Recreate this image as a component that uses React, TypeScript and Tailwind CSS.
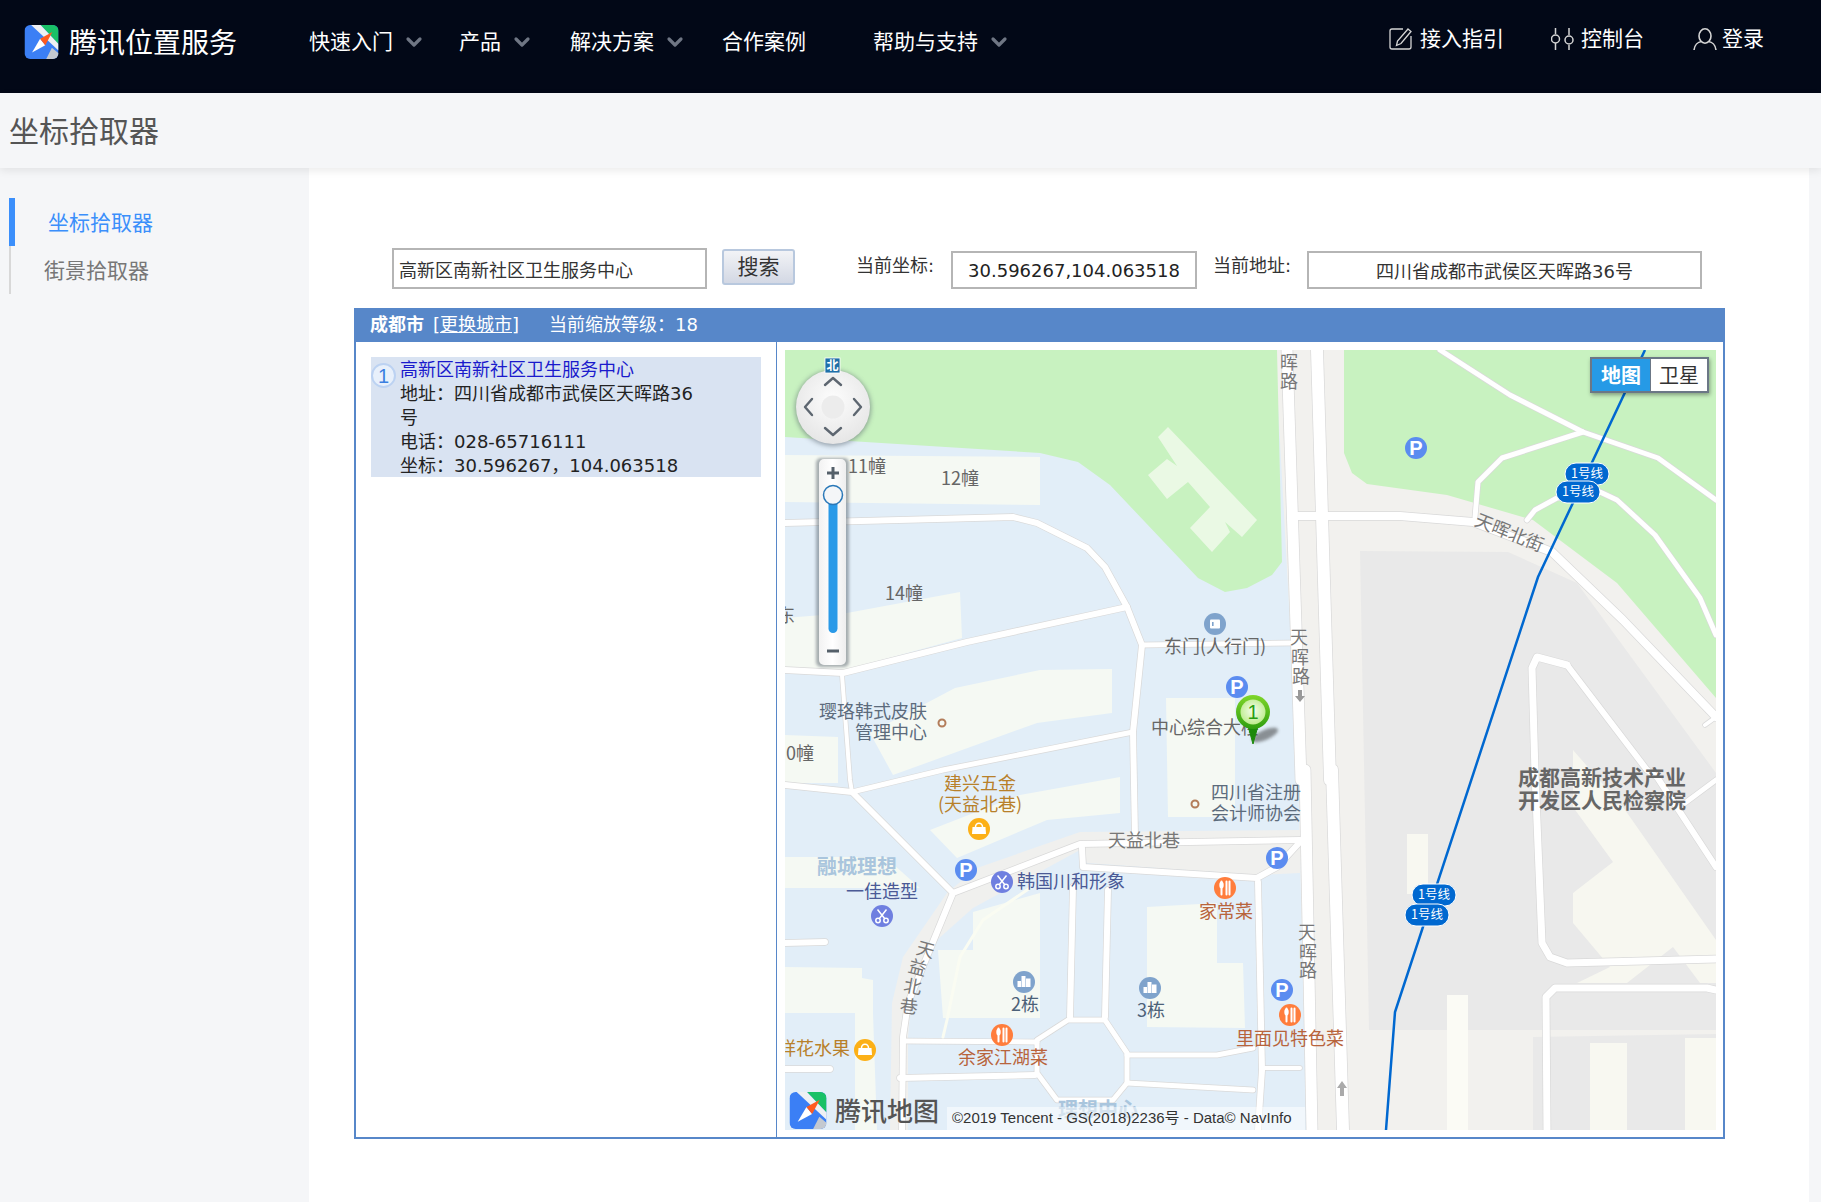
import { ChevronDown } from "lucide-react";

const navItems = [
  { label: "快速入门", width: "w-[150px]", caret: true },
  { label: "产品", width: "w-[111px]", caret: true },
  { label: "解决方案", width: "w-[152px]", caret: true },
  { label: "合作案例", width: "w-[151px]", caret: false },
  { label: "帮助与支持", width: "w-[140px]", caret: true },
];

// [points, width] in map coordinates
const roads: [string, number][] = [
  ["502,0 516,430 520,420 527,780", 11],
  ["532,0 545,430 547,420 558,780", 12],
  ["507,166 615,166 688,172 767,202 838,270 931,367", 8],
  ["655,0 725,45 798,82 873,108 931,150", 5],
  ["798,82 717,108 693,132 690,167", 5],
  ["742,170 750,160 772,148 815,142 832,150 870,185 915,248 931,285", 5],
  ["782,315 752,307 747,318 750,423 757,593 765,607 782,613 931,609", 7],
  ["782,315 862,420 872,427 931,517", 6],
  ["762,780 761,647 770,638 922,638 931,640", 7],
  ["931,430 900,453", 5],
  ["931,367 920,375", 4],
  ["0,173 228,167 252,173 302,198 320,217 342,257 357,295 348,382 350,487", 6],
  ["0,320 58,323 182,292 342,257", 6],
  ["357,295 505,293", 5],
  ["57,325 65,430 67,442", 4],
  ["67,442 158,420 348,382", 5],
  ["0,435 67,442 167,542", 6],
  ["117,780 118,687 123,653 168,543 295,494 515,490", 6],
  ["297,498 298,517 472,528 492,517 515,492", 6],
  ["473,532 477,720 473,780", 6],
  ["288,537 285,667", 6],
  ["323,540 320,667", 6],
  ["118,691 252,692", 5],
  ["115,728 250,725", 6],
  ["342,705 432,705 468,698", 5],
  ["342,733 468,740", 5],
  ["477,718 515,718", 4],
  ["0,593 40,592", 6],
  ["0,719 45,719", 6],
];

const labels = [
  { text: "11幢", cls: "left-[63px] top-[115px] text-[#666]" },
  { text: "12幢", cls: "left-[156px] top-[127px] text-[#666]" },
  { text: "14幢", cls: "left-[100px] top-[242px] text-[#666]" },
  { text: "东", cls: "left-[-8px] top-[264px] text-[#666]" },
  { text: "0幢", cls: "left-[1px] top-[402px] text-[#666]" },
  { text: "璎珞韩式皮肤", cls: "left-[34px] top-[360px] text-[#5c6b7c]" },
  { text: "管理中心", cls: "left-[70px] top-[381px] text-[#5c6b7c]" },
  { text: "东门(人行门)", cls: "left-[379px] top-[295px] text-[#666]" },
  { text: "中心综合大楼", cls: "left-[366px] top-[376px] text-[#666]" },
  { text: "四川省注册", cls: "left-[426px] top-[441px] text-[#5c6b7c]" },
  { text: "会计师协会", cls: "left-[426px] top-[462px] text-[#5c6b7c]" },
  { text: "建兴五金", cls: "left-[159px] top-[432px] text-[#b8802a]" },
  { text: "(天益北巷)", cls: "left-[153px] top-[453px] text-[#b8802a]" },
  { text: "天益北巷", cls: "left-[323px] top-[489px] text-[#777]" },
  { text: "一佳造型", cls: "left-[61px] top-[540px] text-[#4b5a96]" },
  { text: "韩国川和形象", cls: "left-[232px] top-[530px] text-[#4b5a96]" },
  { text: "家常菜", cls: "left-[414px] top-[560px] text-[#b8643c]" },
  { text: "2栋", cls: "left-[226px] top-[653px] text-[#4c6178]" },
  { text: "3栋", cls: "left-[352px] top-[659px] text-[#4c6178]" },
  { text: "里面见特色菜", cls: "left-[451px] top-[687px] text-[#b8643c]" },
  { text: "余家江湖菜", cls: "left-[173px] top-[706px] text-[#b8643c]" },
  { text: "祥花水果", cls: "left-[-7px] top-[697px] text-[#b8802a]" },
  { text: "晖", cls: "left-[495px] top-[11px] text-[#777]" },
  { text: "路", cls: "left-[495px] top-[30px] text-[#777]" },
  { text: "天", cls: "left-[505px] top-[286px] text-[#777]" },
  { text: "晖", cls: "left-[506px] top-[306px] text-[#777]" },
  { text: "路", cls: "left-[507px] top-[325px] text-[#777]" },
  { text: "天", cls: "left-[513px] top-[581px] text-[#777]" },
  { text: "晖", cls: "left-[514px] top-[601px] text-[#777]" },
  { text: "路", cls: "left-[514px] top-[619px] text-[#777]" },
  { text: "天", cls: "left-[132px] top-[598px] rotate-[15deg] text-[#777]" },
  { text: "益", cls: "left-[124px] top-[616px] rotate-[15deg] text-[#777]" },
  { text: "北", cls: "left-[119px] top-[635px] rotate-[10deg] text-[#777]" },
  { text: "巷", cls: "left-[115px] top-[655px] rotate-[6deg] text-[#777]" },
  { text: "天晖北街", cls: "left-[689px] top-[181px] rotate-[22deg] text-[#777]" },
];

const parkings = [[631, 98], [452, 337], [181, 520], [492, 508], [497, 640]];
const lineBadges = [[802, 124], [793, 142], [649, 545], [642, 565]];

function Logo({ className }: { className: string }) {
  return (
    <svg viewBox="0 0 36 36" className={className}>
      <clipPath id="logo-clip">
        <rect width="36" height="36" rx="6" />
      </clipPath>
      <g clipPath="url(#logo-clip)">
        <rect width="36" height="36" fill="#3b7ff5" />
        <path d="M17 0H36V20Z" fill="#19c167" />
        <path d="M7 0H17L36 20V27Z" fill="#eef0f3" />
        <path d="M29 24L36 30V36H23Z" fill="#c4c9d0" />
        <path d="M8 29L16.5 14.5L22 21.5Z" fill="#fff" />
        <path d="M16.5 14.5L29.5 7.5L22 21.5Z" fill="#ff5a1f" />
      </g>
    </svg>
  );
}

function Poi({ x, y, color, kind }: { x: number; y: number; color: string; kind: string }) {
  return (
    <g transform={`translate(${x} ${y})`}>
      <circle r="11" fill={color} />
      {kind === "bag" && (
        <g fill="#fff">
          <path d="M-6.5 -2H6.5L7 5H-7Z" />
          <path d="M-3.5 -2A3.5 3.8 0 0 1 3.5 -2" fill="none" stroke="#fff" strokeWidth="1.5" />
        </g>
      )}
      {kind === "food" && (
        <g stroke="#fff" strokeLinecap="round" fill="none">
          <path d="M-3.5 -6.5V6.5" strokeWidth="2" />
          <ellipse cx="-3.5" cy="-3" rx="2.2" ry="3.6" fill="#fff" stroke="none" />
          <path d="M1.5 -6.5V6.5M4.5 -6.5V6.5" strokeWidth="2" />
        </g>
      )}
      {kind === "cut" && (
        <g stroke="#fff" fill="none" strokeWidth="1.5">
          <path d="M-4.5 -6.5L3 3M4.5 -6.5L-3 3" />
          <circle cx="-4" cy="4.5" r="2.2" />
          <circle cx="4" cy="4.5" r="2.2" />
        </g>
      )}
      {kind === "tower" && (
        <g fill="#fff">
          <rect x="-6.5" y="-1" width="3.5" height="6" />
          <rect x="-2.5" y="-6" width="4" height="11" />
          <rect x="2" y="-3.5" width="4.5" height="8.5" />
        </g>
      )}
      {kind === "door" && (
        <g>
          <rect x="-5" y="-4.5" width="10" height="9" rx="1" fill="#fff" />
          <rect x="-3" y="-2" width="1.6" height="4" fill="#7fa3cc" />
        </g>
      )}
    </g>
  );
}

function MapBase() {
  return (
    <svg viewBox="0 0 931 780" className="absolute inset-0 h-[780px] w-[931px]">
      <rect width="931" height="780" fill="#e2eef8" />
      {/* road verge on the right, then park and blocks */}
      <path d="M490,0 L931,0 L931,780 L527,780 L520,717 L513,420 Z" fill="#f2f1ee" />
      <path d="M0,87 L255,103 L293,112 L325,135 L413,228 L440,242 L462,238 L487,225 L497,212 L492,0 L0,0 Z" fill="#c8f2c0" />
      <path d="M559,0 L931,0 L931,348 L832,233 L748,170 L662,145 L582,134 L567,123 L559,103 Z" fill="#c8f2c0" />
      <path d="M383,77 L472,170 L457,187 L440,172 L445,182 L427,202 L405,178 L425,157 L403,132 L382,149 L363,125 L382,109 L392,116 L373,87 Z" fill="#eaf9e4" />
      <path d="M575,201 L723,202 L792,233 L931,423 L931,680 L584,680 Z" fill="#e9e9e9" />
      <path d="M748,687 L931,684 L931,780 L748,780 Z" fill="#e9e9e9" />
      <path d="M788,400 L838,457 L931,590 L931,633 L915,633 L888,597 L842,633 L792,633 L825,617 L788,573 L788,543 L828,512 L788,457 Z" fill="#f7f7f0" />
      <rect x="622" y="484" width="21" height="60" fill="#f8f8f1" />
      <rect x="662" y="645" width="21" height="135" fill="#fbfbf5" />
      <rect x="805" y="693" width="37" height="87" fill="#f8f8f1" />
      <rect x="900" y="688" width="31" height="92" fill="#f8f8f1" />
      {/* buildings */}
      <g fill="#f5f9f3">
        <path d="M0,105 L255,107 L255,155 L0,152 Z" />
        <path d="M0,268 L62,263 L175,242 L177,288 L60,320 L0,317 Z" />
        <path d="M85,383 L170,338 L255,320 L327,319 L327,363 L252,373 L108,425 Z" />
        <path d="M0,385 L53,387 L53,433 L0,433 Z" />
        <path d="M381,348 L450,348 L450,467 L383,467 Z" />
        <path d="M145,480 L235,445 L335,427 L335,463 L262,470 L172,508 Z" />
        <path d="M188,562 L255,543 L255,668 L158,668 L153,600 L188,600 Z" />
        <path d="M362,557 L432,553 L432,613 L458,613 L460,678 L362,677 Z" />
        <path d="M0,617 L77,618 L77,628 L88,630 L88,663 L92,780 L70,780 L70,663 L0,663 Z" />
        <path d="M0,507 L100,507 L135,538 L0,538 Z" />
      </g>
      {/* grey band of 天益北巷 */}
      <path d="M105,780 L107,653 L118,607 L162,543 L192,518 L295,482 L515,480 L515,523 L475,525 L302,513 L295,500 L188,558 L152,590 L128,633 L123,687 L123,780 Z" fill="#f0f0ee" />
      <g fill="none" strokeLinejoin="round" strokeLinecap="round">
        {roads.map(([points, width], i) => (
          <polyline key={i} points={points} stroke="#d9d9d9" strokeWidth={width + 1.4} />
        ))}
        <polygon points="252,690 283,670 320,670 342,703 342,733 328,750 272,750 252,723" stroke="#d9d9d9" strokeWidth="6.4" />
        {roads.map(([points, width], i) => (
          <polyline key={i} points={points} stroke="#fff" strokeWidth={width} />
        ))}
        <polygon points="252,690 283,670 320,670 342,703 342,733 328,750 272,750 252,723" stroke="#fff" strokeWidth="5" />
        <polyline points="245,538 198,570 175,607 162,670 158,687" stroke="#fafcf2" strokeWidth="3" />
      </g>
      {/* subway */}
      <polyline points="860,0 753,227 610,662 601,780" fill="none" stroke="#0068d0" strokeWidth="2.5" />
      {/* one way arrows */}
      <path d="M513,340H517V346H520L515,352L510,346H513Z" fill="#999" />
      <path d="M555,746H559V738H562L557,731L552,738H555Z" fill="#aaa" />
      {/* points of interest */}
      <circle cx="157" cy="373" r="3.5" fill="none" stroke="#b37d5a" strokeWidth="2" />
      <circle cx="410" cy="454" r="3.5" fill="none" stroke="#b37d5a" strokeWidth="2" />
      <Poi x={430} y={274} color="#7fa3cc" kind="door" />
      <Poi x={194} y={479} color="#fcb017" kind="bag" />
      <Poi x={80} y={700} color="#fcb017" kind="bag" />
      <Poi x={97} y={566} color="#6f7fe0" kind="cut" />
      <Poi x={217} y={532} color="#6f7fe0" kind="cut" />
      <Poi x={440} y={538} color="#ff7d3c" kind="food" />
      <Poi x={505} y={665} color="#ff7d3c" kind="food" />
      <Poi x={217} y={685} color="#ff7d3c" kind="food" />
      <Poi x={239} y={632} color="#7fa3cc" kind="tower" />
      <Poi x={365} y={638} color="#7fa3cc" kind="tower" />
      {parkings.map(([x, y], i) => (
        <g key={i}>
          <circle cx={x} cy={y} r="11" fill="#5b8cf0" />
          <text x={x} y={y + 7} textAnchor="middle" fontSize="20" fontWeight="700" fill="#fff" fontFamily="Liberation Sans">P</text>
        </g>
      ))}
      {lineBadges.map(([x, y], i) => (
        <g key={i}>
          <rect x={x - 22} y={y - 11} width="44" height="22" rx="11" fill="#0068d0" stroke="#fff" strokeWidth="1" />
          <text x={x} y={y + 4} textAnchor="middle" fontSize="12.5" fill="#fff" fontFamily="Noto Sans CJK SC">1号线</text>
        </g>
      ))}
    </svg>
  );
}

function MapOverlay() {
  return (
    <svg viewBox="0 0 931 780" className="absolute inset-0 h-[780px] w-[931px]">
      <defs>
        <radialGradient id="pad" cx="50%" cy="40%" r="60%">
          <stop offset="0%" stopColor="#fdfdfd" />
          <stop offset="100%" stopColor="#e6e6e6" />
        </radialGradient>
        <linearGradient id="slider" x1="0" x2="1" y1="0" y2="0">
          <stop offset="0%" stopColor="#f2f2f2" />
          <stop offset="50%" stopColor="#fff" />
          <stop offset="100%" stopColor="#eee" />
        </linearGradient>
        <linearGradient id="pin" x1="0" x2="0" y1="0" y2="1">
          <stop offset="0%" stopColor="#7fd62a" />
          <stop offset="100%" stopColor="#2f9e10" />
        </linearGradient>
        <radialGradient id="pin-inner" cx="50%" cy="45%" r="55%">
          <stop offset="0%" stopColor="#f6fdee" />
          <stop offset="100%" stopColor="#bdec8e" />
        </radialGradient>
        <filter id="soft" x="-30%" y="-30%" width="160%" height="160%">
          <feGaussianBlur stdDeviation="2.5" />
        </filter>
        <filter id="soft2" x="-50%" y="-50%" width="200%" height="200%">
          <feGaussianBlur stdDeviation="1.5" />
        </filter>
      </defs>
      {/* pan control */}
      <circle cx="48" cy="58" r="38" fill="#55606a" opacity="0.55" filter="url(#soft)" />
      <circle cx="48" cy="57" r="37" fill="url(#pad)" />
      <circle cx="48" cy="57" r="11.5" fill="#ececec" />
      <g fill="none" stroke="#5d6670" strokeWidth="2.4" strokeLinecap="round" strokeLinejoin="round">
        <path d="M40 35L48 28L56 35" />
        <path d="M40 78L48 85L56 78" />
        <path d="M27 49L20 57L27 65" />
        <path d="M69 49L76 57L69 65" />
      </g>
      <rect x="40" y="8" width="15" height="15" fill="#1f6fa8" stroke="#fff" strokeWidth="0.8" />
      <text x="47.5" y="20" textAnchor="middle" fontSize="12" fontWeight="700" fill="#fff" fontFamily="Noto Sans CJK SC">北</text>
      {/* zoom slider */}
      <rect x="31" y="108" width="33" height="209" rx="5" fill="#55606a" opacity="0.5" filter="url(#soft2)" />
      <rect x="34" y="109" width="27" height="206" rx="5" fill="url(#slider)" />
      <path d="M42 123H54M48 117V129" stroke="#55606a" strokeWidth="3" />
      <path d="M42 301H54" stroke="#55606a" strokeWidth="3" />
      <rect x="43.5" y="145" width="9" height="138" rx="4.5" fill="#2a9ae8" />
      <circle cx="48" cy="145" r="9.5" fill="#f4f6f8" stroke="#2a78b8" strokeWidth="1.5" />
      {/* marker */}
      <ellipse cx="480" cy="385" rx="14" ry="5" fill="#333" opacity="0.5" transform="rotate(-24 480 385)" filter="url(#soft2)" />
      <path d="M463 376L468 394L473 376Z" fill="#1d8a0c" stroke="#1d8a0c" strokeWidth="1" />
      <circle cx="468" cy="362" r="17" fill="url(#pin)" />
      <circle cx="468" cy="362" r="12.5" fill="url(#pin-inner)" />
      <text x="468" y="369" textAnchor="middle" fontSize="20" fill="#2a9d12" fontFamily="Liberation Sans">1</text>
    </svg>
  );
}

function MapView() {
  return (
    <div className="relative mt-2 ml-2 h-[780px] w-[931px] overflow-hidden bg-[#e2eef8] font-['Noto_Sans_CJK_SC',sans-serif]">
      <MapBase />
      {labels.map((l, i) => (
        <span key={i} className={`absolute -translate-y-1/2 text-[18px] leading-none whitespace-nowrap ${l.cls}`}>
          {l.text}
        </span>
      ))}
      <span className="absolute top-[516px] left-[32px] -translate-y-1/2 text-[20px] leading-none font-bold whitespace-nowrap text-[#a9c5dd]">融城理想</span>
      <span className="absolute top-[759px] left-[273px] -translate-y-1/2 text-[20px] leading-none font-bold whitespace-nowrap text-[#a9c5dd]">理想中心</span>
      <div className="absolute top-[426px] left-[733px] -translate-y-1/2 text-[21px] leading-none font-bold whitespace-nowrap text-[#666]">成都高新技术产业</div>
      <div className="absolute top-[449px] left-[733px] -translate-y-1/2 text-[21px] leading-none font-bold whitespace-nowrap text-[#666]">开发区人民检察院</div>
      <MapOverlay />
      {/* map type switch */}
      <div className="absolute top-[7px] left-[805px] flex h-[36px] w-[119px] border-2 border-[#6b7786] bg-white text-[20px] leading-[32px] shadow-[1px_2px_4px_rgba(0,0,0,0.35)]">
        <span className="w-[58px] bg-[#269ae6] text-center font-bold text-white">地图</span>
        <span className="flex-1 border-l border-[#6b7786] text-center text-[#333]">卫星</span>
      </div>
      {/* copyright */}
      <div className="absolute bottom-0 left-[162px] h-[23px] w-[358px] bg-white/50" />
      <span className="absolute top-[767px] left-[167px] -translate-y-1/2 font-['Liberation_Sans','Noto_Sans_CJK_SC',sans-serif] text-[15px] leading-none whitespace-nowrap text-[#333]">
        ©2019 Tencent - GS(2018)2236号 - Data© NavInfo
      </span>
      <Logo className="absolute top-[742px] left-[4px] h-[37px] w-[38px]" />
      <span className="absolute top-[760px] left-[50px] -translate-y-1/2 text-[26px] leading-none font-medium whitespace-nowrap text-[#555]">腾讯地图</span>
    </div>
  );
}

export default function App() {
  return (
    <div className="min-h-[1202px] w-[1821px] overflow-hidden bg-[#f5f6f8] font-['DejaVu_Sans','Noto_Sans_CJK_SC',sans-serif]">
      <header className="flex h-[93px] items-start bg-[#020817] text-white">
        <div className="mt-[25px] ml-[24px] flex h-[34px] w-[285px] items-center">
          <Logo className="h-[34px] w-[35px]" />
          <span className="mt-[3px] ml-[10px] text-[28px] leading-none whitespace-nowrap">腾讯位置服务</span>
        </div>
        <nav className="mt-[30px] flex h-[24px] items-center text-[21px] leading-none">
          {navItems.map((item) => (
            <div key={item.label} className={`flex items-center whitespace-nowrap ${item.width}`}>
              {item.label}
              {item.caret && <ChevronDown className="ml-[9px] h-[24px] w-[24px] text-[#6f7684]" strokeWidth={3.2} />}
            </div>
          ))}
        </nav>
        <div className="mt-[27px] ml-[376px] flex h-[24px] items-center text-[21px] leading-none">
          <svg viewBox="0 0 23 22" className="h-[22px] w-[23px] text-[#d5d5d5]" fill="none" stroke="currentColor" strokeWidth="1.3">
            <path d="M14 1H3a2 2 0 0 0-2 2V19a2 2 0 0 0 2 2H20a2 2 0 0 0 2-2V8" />
            <path d="M19 1L22 3.5L12 15.5L7.5 17.5L8.5 13Z" />
          </svg>
          <span className="ml-[8px] whitespace-nowrap">接入指引</span>
          <svg viewBox="0 0 23 22" className="ml-[47px] h-[22px] w-[23px] text-[#d5d5d5]" fill="none" stroke="currentColor" strokeWidth="1.5">
            <path d="M4.5 0V6M4.5 15V22M18 0V7M18 17V22" />
            <circle cx="4.5" cy="11" r="4" />
            <circle cx="18" cy="12" r="4" />
          </svg>
          <span className="ml-[7px] whitespace-nowrap">控制台</span>
          <svg viewBox="0 0 24 22" className="ml-[49px] h-[22px] w-[24px] text-[#d5d5d5]" fill="none" stroke="currentColor" strokeWidth="1.6">
            <ellipse cx="12" cy="8" rx="6" ry="7.2" />
            <path d="M1 22C1.5 17 5 14 8.5 13.5M23 22C22.5 17 19 14 15.5 13.5" />
          </svg>
          <span className="ml-[5px] whitespace-nowrap">登录</span>
        </div>
      </header>

      <div className="relative z-10 h-[75px] bg-[#f5f6f8] pt-[24px] pl-[9px] text-[30px] leading-[30px] text-[#555] shadow-[0_3px_8px_rgba(0,0,0,0.08)]">
        坐标拾取器
      </div>

      <div className="flex">
        <aside className="w-[309px] pt-[30px] pl-[9px] text-[21px]">
          <div className="flex h-[48px] items-center border-l-[6px] border-[#3b8ffb] pt-[4px] pl-[33px] text-[#3b8ffb]">坐标拾取器</div>
          <div className="flex h-[48px] items-center border-l-2 border-[#d8d8d8] pt-[4px] pl-[33px] text-[#777]">街景拾取器</div>
        </aside>

        <main className="h-[1034px] w-[1500px] bg-white pt-[80px]">
          <div className="flex h-[41px] items-start text-[18px] text-[#333]">
            <input
              readOnly
              value="高新区南新社区卫生服务中心"
              className="ml-[83px] h-[41px] w-[315px] border-2 border-[#b5b5b5] bg-white pl-[5px] text-[18px] text-[#333] outline-none"
            />
            <button className="mt-[1px] ml-[15px] h-[36px] w-[73px] rounded-[3px] border-2 border-[#b8c8de] bg-linear-to-b from-[#f2f3f6] to-[#d3d8e4] text-[21px] leading-none text-[#333]">
              搜索
            </button>
            <span className="mt-[6px] ml-[61px] w-[95px] leading-[24px]">当前坐标:</span>
            <input
              readOnly
              value="30.596267,104.063518"
              className="mt-[3px] h-[38px] w-[246px] border-2 border-[#b5b5b5] bg-white text-center text-[18px] text-[#222] outline-none"
            />
            <span className="mt-[6px] ml-[16px] w-[94px] leading-[24px]">当前地址:</span>
            <input
              readOnly
              value="四川省成都市武侯区天晖路36号"
              className="mt-[3px] h-[38px] w-[395px] border-2 border-[#b5b5b5] bg-white text-center text-[18px] text-[#333] outline-none"
            />
          </div>

          <div className="mt-[19px] ml-[45px] h-[831px] w-[1371px] border-2 border-[#5787c9]">
            <div className="flex h-[32px] items-center bg-[#5787c9] pb-[2px] pl-[14px] text-[18px] leading-none whitespace-nowrap text-white">
              <b>成都市</b>
              <span className="ml-[9px]">
                [<span className="underline">更换城市</span>]
              </span>
              <span className="ml-[30px]">当前缩放等级：18</span>
            </div>
            <div className="flex h-[795px]">
              <div className="w-[421px] border-r border-[#5787c9] pt-[15px] pl-[15px]">
                <div className="flex h-[120px] w-[390px] bg-[#d9e3f2] text-[18px] leading-[24px] text-[#222]">
                  <div className="w-[29px] shrink-0 pt-[6px]">
                    <div className="flex h-[25px] w-[25px] items-center justify-center rounded-full border-2 border-[#bcd2f2] bg-[#e8f0fb] font-['Liberation_Sans'] text-[20px] leading-none text-[#3b7fe0]">1</div>
                  </div>
                  <div className="w-[300px] pt-[1px]">
                    <div className="whitespace-nowrap text-[#1a1acc]">高新区南新社区卫生服务中心</div>
                    <div>地址：四川省成都市武侯区天晖路36号</div>
                    <div>电话：028-65716111</div>
                    <div className="whitespace-nowrap">坐标：30.596267，104.063518</div>
                  </div>
                </div>
              </div>
              <MapView />
            </div>
          </div>
        </main>
      </div>
    </div>
  );
}
